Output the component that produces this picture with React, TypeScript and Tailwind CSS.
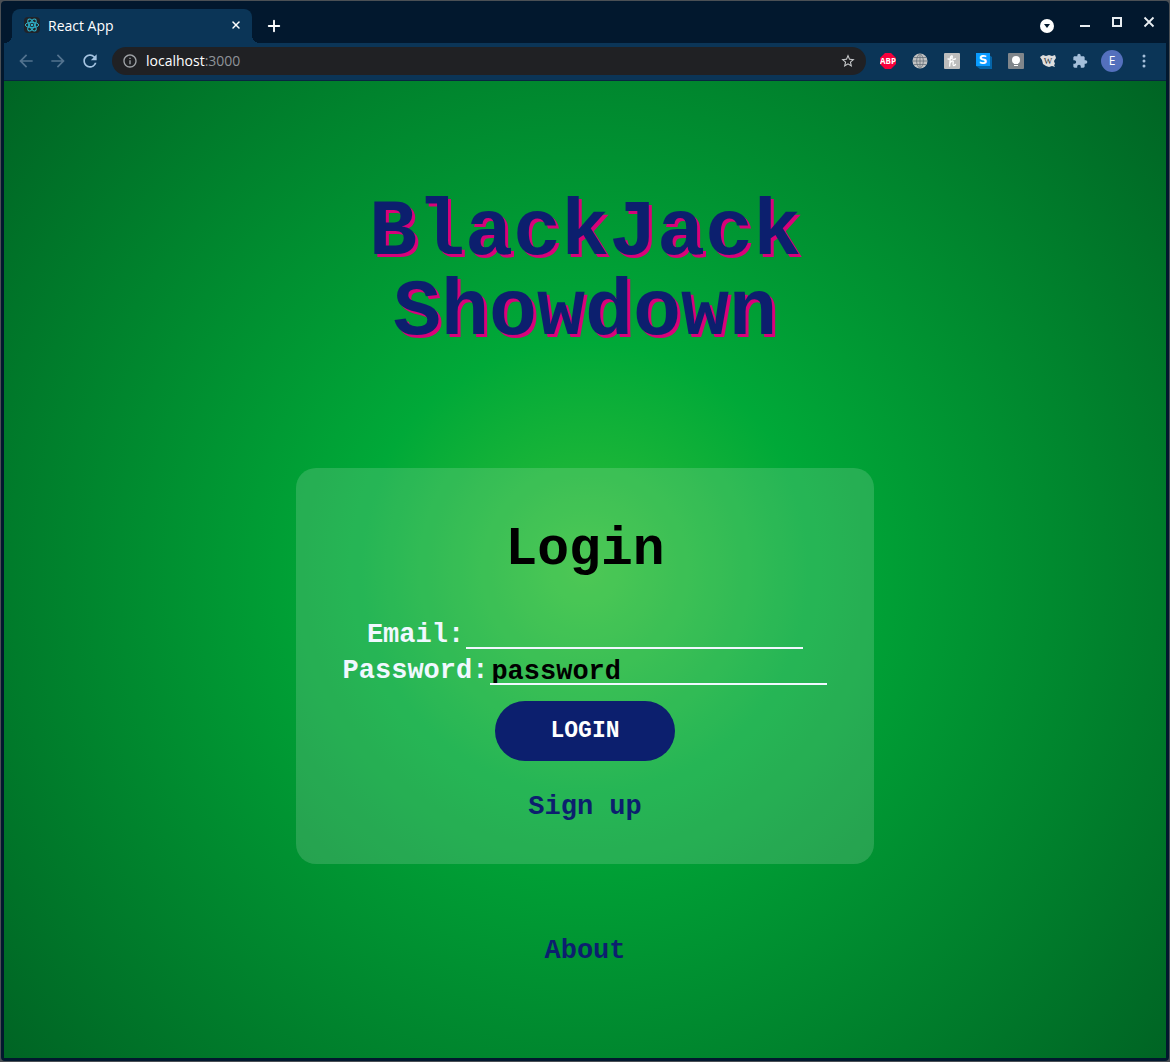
import React from "react";
import { Plus, X } from "lucide-react";
import { MdArrowBack, MdArrowForward, MdExtension, MdInfoOutline, MdRefresh, MdStarBorder } from "react-icons/md";

const iconButton = "flex size-8 shrink-0 items-center justify-center";

function ReactLogo() {
  return (
    <span className="flex size-4 items-center justify-center rounded-sm bg-[#20232a]">
      <svg viewBox="-12 -12 24 24" className="size-4" fill="none" stroke="#2fb4cc" strokeWidth="1.5">
        <circle r="2" fill="#2fb4cc" stroke="none" />
        <ellipse rx="10" ry="4" />
        <ellipse rx="10" ry="4" transform="rotate(60)" />
        <ellipse rx="10" ry="4" transform="rotate(120)" />
      </svg>
    </span>
  );
}

function TabStrip() {
  return (
    <header className="flex h-10 items-stretch bg-[#02182e]">
      <div className="relative ml-2 mt-1.5 flex w-60 items-center rounded-t-lg bg-[#0b3557] px-3 pb-0.5 text-white">
        <span className="absolute bottom-0 right-full size-2 bg-[radial-gradient(circle_at_0_0,#02182e_8px,#0b3557_8px)]" />
        <span className="absolute bottom-0 left-full size-2 bg-[radial-gradient(circle_at_100%_0,#02182e_8px,#0b3557_8px)]" />
        <ReactLogo />
        <span className="ml-2 flex-1 text-[14px]">React App</span>
        <button aria-label="Close tab" className="-mr-1 flex size-4 items-center justify-center rounded">
          <X className="size-3" strokeWidth={3} />
        </button>
      </div>
      <button aria-label="New tab" className="ml-1.5 mt-1.5 flex w-8 items-center justify-center text-white">
        <Plus className="size-[18px]" strokeWidth={2.5} />
      </button>
      <div className="ml-auto flex pr-px pt-[3px] text-[#e8edf2]">
        <button aria-label="Search tabs" className="mr-1.5 mt-1 flex size-8 items-center justify-center">
          <svg viewBox="0 0 14 14" className="size-3.5">
            <circle cx="7" cy="7" r="7" fill="#fff" />
            <path d="M4 5h6L7 9z" fill="#02182e" />
          </svg>
        </button>
        <button aria-label="Minimize" className={iconButton}>
          <svg viewBox="0 0 12 12" className="size-3">
            <path d="M1 10h10" stroke="currentColor" strokeWidth="2" />
          </svg>
        </button>
        <button aria-label="Maximize" className={iconButton}>
          <svg viewBox="0 0 12 12" className="size-3">
            <path d="M2 2h8v8H2z" fill="none" stroke="currentColor" strokeWidth="2" />
          </svg>
        </button>
        <button aria-label="Close window" className={iconButton}>
          <svg viewBox="0 0 12 12" className="size-3">
            <path d="M1.500 1.500l9 9M10.500 1.500l-9 9" stroke="currentColor" strokeWidth="1.800" />
          </svg>
        </button>
      </div>
    </header>
  );
}

function Extensions() {
  return (
    <div className="flex shrink-0 items-center">
      <button aria-label="Adblock Plus" className={iconButton}>
        <svg viewBox="0 0 16 16" className="size-4">
          <path d="M5 0h6l5 5v6l-5 5H5l-5-5V5z" fill="#f8003c" />
          <text x="8" y="11" textAnchor="middle" fontSize="8" fontWeight="700" fill="#fff" fontFamily="Open Sans, sans-serif">ABP</text>
        </svg>
      </button>
      <button aria-label="Globe" className={iconButton}>
        <svg viewBox="0 0 16 16" className="size-4">
          <circle cx="8" cy="8" r="7.5" fill="#c2c2c2" />
          <path d="M8 1v14M1 8h14M2 4.500h12M2 11.500h12M8 .5C3.500 4 3.500 12 8 15.500M8 .5c4.500 3.500 4.500 11.500 0 15" fill="none" stroke="#67717a" strokeWidth=".8" />
        </svg>
      </button>
      <button aria-label="Honey" className={iconButton}>
        <svg viewBox="0 0 16 16" className="size-4">
          <rect width="16" height="16" rx="1" fill="#bdbdbd" />
          <path d="M4 6c2.500.5 4.500-1 4.300-2.500C8 2.300 6.500 3 6.300 5L5.700 13M5.900 10.500C6.800 8 9.300 7 9.200 9c0 1.500-.7 3.500.3 3.700.8.100 1.500-.5 2-1.200M8.500 6c1 .5 2 .3 3-.2" fill="none" stroke="#fff" strokeWidth="1.300" strokeLinecap="round" />
        </svg>
      </button>
      <button aria-label="Stylish" className={iconButton}>
        <svg viewBox="0 0 16 16" className="size-4">
          <path d="M2 2h11l3 2v12H4l-4-3z" fill="#0565a8" />
          <rect width="14" height="13" fill="#0a9bff" />
          <text x="7" y="11" textAnchor="middle" fontSize="12" fontWeight="900" fill="#fff" fontFamily="DejaVu Sans, sans-serif">S</text>
        </svg>
      </button>
      <button aria-label="Hints" className={iconButton}>
        <svg viewBox="0 0 16 16" className="size-4">
          <rect width="16" height="16" rx="1" fill="#80868b" />
          <circle cx="8" cy="7" r="4" fill="#fff" />
          <path d="M6 10h4v1H6zM6 12h4v1H6z" fill="#fff" />
        </svg>
      </button>
      <button aria-label="Wikipedia" className={iconButton}>
        <svg viewBox="0 0 16 16" className="size-4">
          <path d="M0 4l3-2 3 1 3-1 3 1 3-1 1 3-2 3 1 3-1 1 1 2-3-1-3 1-3-1-3-2-1-4z" fill="#dedede" />
          <text x="8" y="11" textAnchor="middle" fontSize="9" fill="#2f353a" fontFamily="Liberation Serif, serif">W</text>
        </svg>
      </button>
      <button aria-label="Extensions" className={iconButton}>
        <MdExtension className="size-4 text-[#a5bfda]" />
      </button>
      <button aria-label="Profile" className={iconButton}>
        <span className="flex size-[22px] items-center justify-center rounded-full bg-[#5470bd] text-[12px] text-white">E</span>
      </button>
      <button aria-label="Menu" className={iconButton}>
        <svg viewBox="0 0 16 16" className="size-4" fill="#a5bfda">
          <circle cx="8" cy="3" r="1.500" />
          <circle cx="8" cy="8" r="1.500" />
          <circle cx="8" cy="13" r="1.500" />
        </svg>
      </button>
    </div>
  );
}

function Toolbar() {
  return (
    <nav className="flex h-[38px] items-center border-b border-[#082641] bg-[#0b3557] pb-0.5 pl-1.5 pr-1.5">
      <button aria-label="Back" className={iconButton}>
        <MdArrowBack className="size-5 text-[#53738f]" />
      </button>
      <button aria-label="Forward" className={iconButton}>
        <MdArrowForward className="size-5 text-[#53738f]" />
      </button>
      <button aria-label="Reload" className={iconButton}>
        <MdRefresh className="size-5 text-[#a5c4e2]" />
      </button>
      <div className="mx-1.5 flex h-7 min-w-0 flex-1 items-center rounded-full bg-[#202124] px-2.5">
        <MdInfoOutline className="size-4 text-[#a0a4a8]" />
        <p className="ml-2 flex-1 text-[14px] text-[#8f9398]">
          <span className="text-white">localhost</span>:3000
        </p>
        <button aria-label="Bookmark this page">
          <MdStarBorder className="size-4 text-[#c8cacc]" />
        </button>
      </div>
      <Extensions />
    </nav>
  );
}

function LoginCard() {
  const field =
    "h-7 w-[337px] min-w-0 border-b-2 border-[#f0f8ff] bg-transparent pl-px pt-1 text-black outline-none placeholder:text-black placeholder:opacity-100";
  return (
    <section className="flex w-[578px] max-w-full flex-col items-center rounded-[20px] bg-white/15 px-8 pb-[43px] pt-[50px]">
      <h2 className="text-[53px] leading-[64px]">Login</h2>
      <form className="mt-[39px] flex w-full flex-col items-center gap-2" onSubmit={(e) => e.preventDefault()}>
        <div className="flex gap-0.5">
          <label htmlFor="email" className="text-[#f0f8ff]">Email:</label>
          <input id="email" type="email" className={field} />
        </div>
        <div className="flex gap-0.5">
          <label htmlFor="password" className="text-[#f0f8ff]">Password:</label>
          <input id="password" type="password" placeholder="password" className={field} />
        </div>
        <button className="mt-2 h-[60px] w-[180px] rounded-full bg-[#0c1f6e] text-[23px] text-white">LOGIN</button>
      </form>
      <a href="#signup" className="mt-8 text-[#0c1f6e]">Sign up</a>
    </section>
  );
}

export default function App() {
  return (
    <div className="min-h-screen bg-[#4b5055] p-px">
      <div className="flex min-h-[calc(100vh-2px)] flex-col rounded-sm border-x-3 border-b-3 border-t-2 border-[#02182e] bg-[#02182e] font-['Open_Sans','Noto_Sans',sans-serif]">
        <TabStrip />
        <Toolbar />
        <main className="flex flex-1 flex-col items-center bg-[radial-gradient(circle,#2fbf38_0%,#00a938_30%,#006424_100%)] pb-16 pt-28 font-['Liberation_Mono','DejaVu_Sans_Mono',monospace] text-[27px] font-bold leading-7">
          <h1 className="text-center text-[80px] leading-[80px] text-[#0c1f6e] [text-shadow:3px_3px_0_#d9017a]">
            BlackJack
            <br />
            Showdown
          </h1>
          <div className="mt-[115px] flex w-full justify-center">
            <LoginCard />
          </div>
          <a href="#about" className="mt-[73px] text-[#0c1f6e]">About</a>
        </main>
      </div>
    </div>
  );
}
